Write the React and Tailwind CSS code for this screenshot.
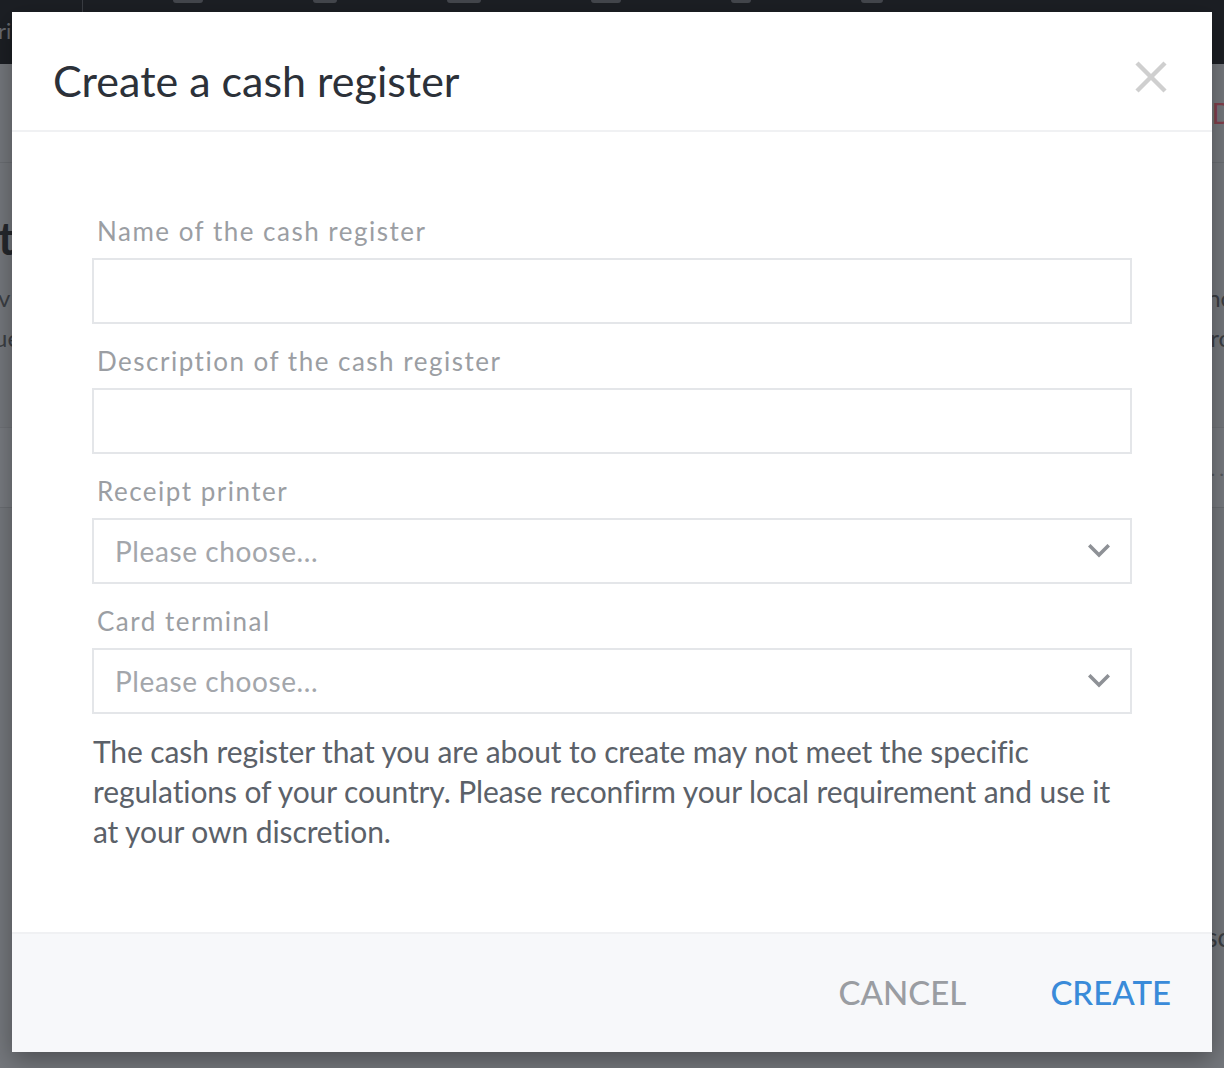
import React from "react";

// Chevron used inside the select boxes
const Chevron = () => (
  <svg width="22" height="14" viewBox="0 0 22 14" fill="none">
    <polyline points="2.5,2.5 11,11 19.5,2.5" stroke="#8e9196" strokeWidth="3.6" strokeLinecap="square" />
  </svg>
);

const CloseIcon = () => (
  <svg width="32" height="32" viewBox="0 0 32 32" fill="none">
    <line x1="2" y1="2" x2="30" y2="30" stroke="#cfcfcf" strokeWidth="4.5" />
    <line x1="30" y1="2" x2="2" y2="30" stroke="#cfcfcf" strokeWidth="4.5" />
  </svg>
);

const Field = ({ label, select }) => (
  <div className="flex flex-col">
    <label className="pl-[5px] mb-[11px] text-[26px] leading-[32px] tracking-[1.5px] text-[#9b9ea3]">{label}</label>
    {select ? (
      <div className="h-[66px] border-2 border-[#e4e6e9] flex items-center justify-between pl-[21px] pr-[20px]">
        <span className="text-[28px] tracking-[0.6px] text-[#a3a6ab]">Please choose...</span>
        <Chevron />
      </div>
    ) : (
      <input className="h-[66px] border-2 border-[#e4e6e9] outline-none px-5 text-[26px] text-[#2c3139]" />
    )}
  </div>
);

const App = () => {
  return (
    <div className="relative w-[1224px] h-[1068px] overflow-hidden bg-[#75787d] font-['Lato','Open_Sans',sans-serif]">
      {/* page behind the dialog, already dimmed */}
      <div className="h-[64px] bg-[#1c1f24] flex">
        <div className="w-[83px] border-r border-[#3b3e44] flex items-start pt-[14px]">
          <span className="-ml-[2px] text-[22px] text-[#666a70]">ri</span>
        </div>
        <div className="flex-1 flex items-start gap-[110px] pl-[90px]">
          <span className="w-[30px] h-[3px] rounded-b bg-[#44474d]" />
          <span className="w-[24px] h-[3px] rounded-b bg-[#44474d]" />
          <span className="w-[34px] h-[3px] rounded-b bg-[#44474d]" />
          <span className="w-[30px] h-[3px] rounded-b bg-[#44474d]" />
          <span className="w-[20px] h-[3px] rounded-b bg-[#44474d]" />
          <span className="w-[22px] h-[3px] rounded-b bg-[#44474d]" />
        </div>
      </div>
      <div className="h-[99px] border-b border-[#6b6e73] flex items-center justify-end">
        <span className="-mr-[9px] text-[28px] text-[#84404c]">D</span>
      </div>
      <div className="h-[265px] border-b border-[#6f7277] flex flex-col justify-start">
        <div className="flex justify-between pt-[50px]">
          <span className="-ml-[2px] text-[46px] leading-[50px] font-bold text-[#25282d]">tc</span>
        </div>
        <div className="flex justify-between pt-[15px] text-[24px] leading-[40px] text-[#3c3f44]">
          <span className="-ml-[2px]">v</span>
          <span className="-mr-[8px]">nc</span>
        </div>
        <div className="flex justify-between text-[24px] leading-[40px] text-[#3c3f44]">
          <span className="-ml-[6px]">ue</span>
          <span className="-mr-[6px]">rc</span>
        </div>
      </div>
      <div className="h-[80px] border-b border-[#6b6e73] bg-[#787b80] flex items-center justify-end">
        <span className="-mr-[4px] text-[20px] tracking-[4px] text-[#55585d]">...</span>
      </div>
      <div className="flex justify-end pt-[410px]">
        <span className="-mr-[6px] text-[26px] text-[#3c3f44]">sc</span>
      </div>

      {/* dialog */}
      <div className="absolute left-[12px] top-[12px] w-[1200px] h-[1040px] bg-white flex flex-col shadow-[0_8px_24px_rgba(0,0,0,0.35)]">
        <div className="h-[120px] border-b-2 border-[#f0f1f3] flex items-start justify-between pl-[41px] pr-[45px] pt-[43px]">
          <h2 className="text-[43px] leading-[52px] text-[#2c3139]">Create a cash register</h2>
          <button className="mt-[6px]">
            <CloseIcon />
          </button>
        </div>

        <div className="flex-1 px-[80px] pt-[83px]">
          <div className="flex flex-col gap-[21px]">
            <Field label="Name of the cash register" />
            <Field label="Description of the cash register" />
            <Field label="Receipt printer" select />
            <Field label="Card terminal" select />
          </div>
          <p className="mt-[17px] pl-[1px] text-[30px] leading-[40px] tracking-[-0.1px] text-[#5b6169]">
            The cash register that you are about to create may not meet the specific regulations of your country. Please
            reconfirm your local requirement and use it at your own discretion.
          </p>
        </div>

        <div className="h-[120px] border-t-2 border-[#f0f1f3] bg-[#f7f8fa] flex items-center justify-end gap-[84px] pr-[41px]">
          <button className="text-[33px] font-medium text-[#9a9da2]">CANCEL</button>
          <button className="text-[33px] font-medium text-[#3a8bd9]">CREATE</button>
        </div>
      </div>
    </div>
  );
};

export default App;
